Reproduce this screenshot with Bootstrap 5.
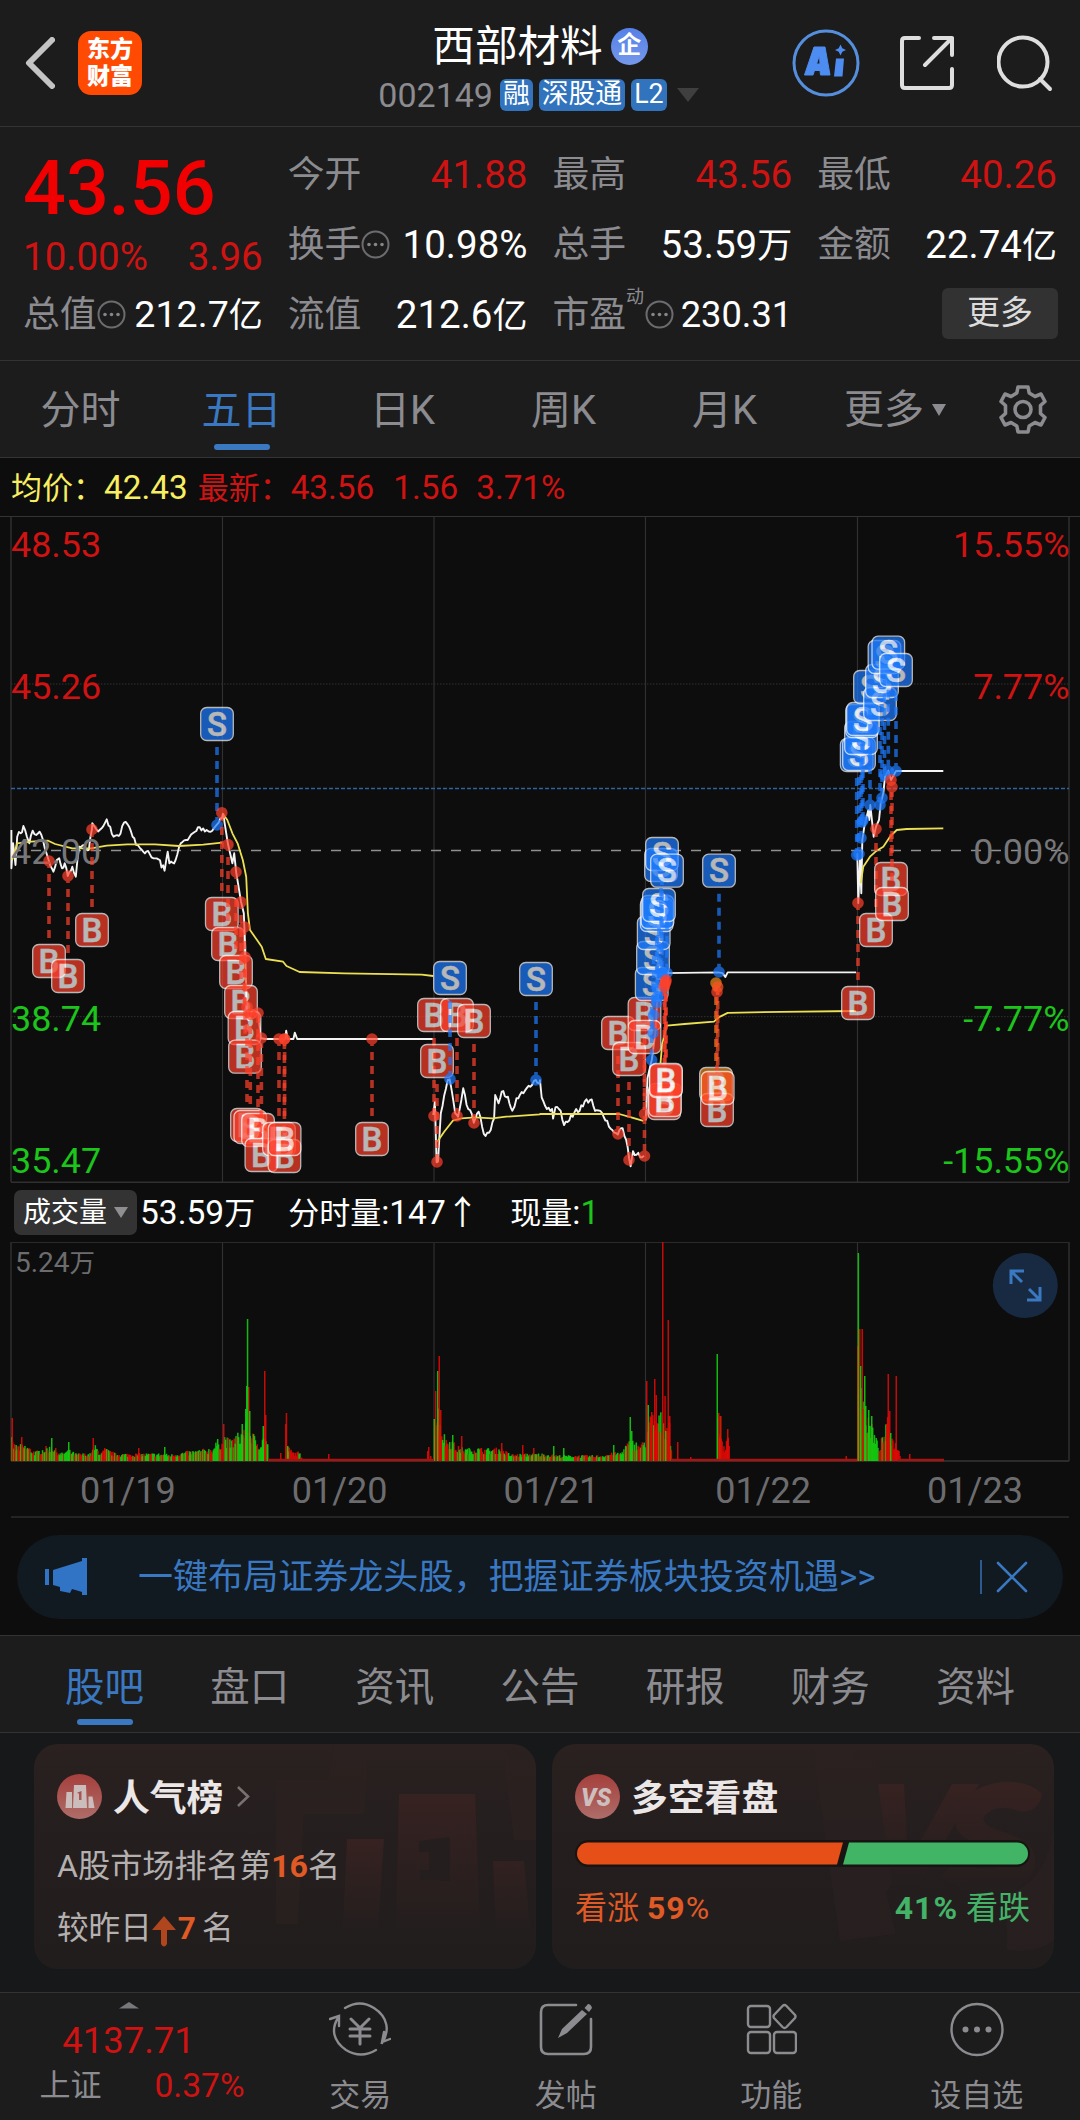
<!DOCTYPE html>
<html lang="zh-CN">
<head>
<meta charset="utf-8">
<meta name="viewport" content="width=device-width, initial-scale=1">
<title>西部材料 002149</title>
<link href="https://cdn.jsdelivr.net/npm/bootstrap@5.3.0/dist/css/bootstrap.min.css" rel="stylesheet">
<style>
  :root { --panel:#1c1c1c; --ink:#8b8b90; --line:#333335; --up:#cf1212; --down:#1cc41c; --blue:#3a78c2; }
  body { width:1080px; height:2120px; overflow:hidden; background:#0d0d0d; color:var(--ink);
    font-family:Roboto,"Noto Sans CJK SC",sans-serif; font-size:36.8px; line-height:1; }
  svg { display:block; flex:none; }
  .up { color:var(--up); } .down { color:var(--down); } .wht { color:#fff; }
  .panel { background:var(--panel); }
  .topbar { height:127px; border-bottom:1px solid var(--line); padding:0 27px 0 25px; }
  .logo { width:64px; height:64px; border-radius:13px; background:#ff4a03; color:#fff; font-weight:900; font-size:23px; line-height:27px; padding-top:5px; margin-left:23px; }
  .stockname { font-size:42.6px; line-height:48px; }
  .ent { width:37px; height:37px; border-radius:50%; background:linear-gradient(#5580e8,#7598ea); color:#fff; font-size:24px; font-weight:700; margin-left:8px; line-height:34px; }
  .code { font-size:34px; margin-right:7px; }
  .tag { background:#3173bd; color:#fff; border-radius:6px; height:32px; line-height:31px; font-size:26.8px; padding:0 3px; }
  .quote { height:234px; padding:13px 23px 0 23px; gap:25px; border-bottom:1px solid var(--line); }
  .qcol { flex:1 1 0; min-width:0; }
  .qrow { height:70px; white-space:nowrap; }
  .qrow .val { font-size:38.5px; }
  .qrow .val small { font-size:35px; }
  .bigprice { font-size:75.5px; font-weight:500; color:#f00000; height:88px; line-height:97px; }
  .chg { height:52px; line-height:57px; font-size:38.5px; }
  .morebtn { width:116px; height:51px; line-height:50px; border-radius:6px; background:#323232; color:#dcdcdc; font-size:33px; }
  .ktabs { height:97px; border-bottom:1px solid var(--line); font-size:40px; }
  .ktabs > div { position:relative; height:97px; line-height:100px; }
  .ktabs .cell { width:161px; }
  .act { color:var(--blue) !important; }
  .act::after { content:""; position:absolute; left:50%; margin-left:-28px; width:56px; height:6px; border-radius:3px; background:var(--blue); bottom:8px; }
  .legend5 { height:58px; padding:0 11px; font-size:33.3px; line-height:59px; white-space:pre; }
  .legend5 .zh { font-size:31px; }
  .volbar { height:59px; padding:7px 15px 0 14px; font-size:33.5px; line-height:46px; white-space:nowrap; }
  .volbar .zh { font-size:31px; }
  .volbtn { width:123px; height:45px; border-radius:7px; background:#333; font-size:28px; line-height:44px; padding:0 9px; }
  .notice { margin:17px 17px 0; height:84px; border-radius:42px; background:#111921; color:var(--blue); font-size:35px; line-height:85px; }
  .btabs { margin-top:16px; height:98px; border-top:1px solid var(--line); border-bottom:1px solid var(--line); padding:0 32px; font-size:39.5px; }
  .btabs > div { flex:1 1 0; position:relative; height:96px; line-height:103px; text-align:center; }
  .btabs .act::after { bottom:7px; }
  .cards { height:259px; background:#17181a; padding:11px 26px 0 34px; gap:16px; }
  .tile { position:relative; width:502px; height:225px; border-radius:24px; background:linear-gradient(#2a2120,#241e1e 45%,#221d1d); overflow:hidden; padding:27px 24px 0 23px; color:#b4b0b0; font-size:32.2px; }
  .tile .bgart { position:absolute; right:0; top:0; }
  .tile > div { position:relative; }
  .tile .ttl { font-size:36.8px; font-weight:700; color:#ebe7e7; margin-left:11px; line-height:50px; padding-top:3px; height:50px; }
  .or { color:#e05a26; } .gr { color:#43b368; }
  .dock { height:128px; border-top:1px solid var(--line); font-size:31px; }
  .dock .cell { width:205.5px; padding:9px 0 0 1px; }
  .dock .cell span { margin-top:15px; line-height:48px; }
  .idx { width:257px; padding-top:9px; }
</style>
</head>
<body>
<header class="panel topbar d-flex align-items-center">
  <div class="d-flex align-items-center" style="width:330px">
    <svg width="30" height="52" viewBox="0 0 30 52"><path d="M27 3 4 26 27 49" fill="none" stroke="#c4c4c4" stroke-width="6" stroke-linecap="round" stroke-linejoin="round"/></svg>
    <div class="logo text-center">东方<br>财富</div>
  </div>
  <div class="flex-grow-1 d-flex flex-column align-items-center pt-2">
    <div class="d-flex align-items-center"><span class="stockname wht">西部材料</span><span class="ent text-center">企</span></div>
    <div class="d-flex align-items-center mt-2" style="margin-left:-3px"><span class="code">002149</span><span class="tag">融</span><span class="tag" style="margin-left:6px">深股通</span><span class="tag" style="margin-left:6px">L2</span>
      <svg width="22" height="16" style="margin-left:10px"><path d="M0 1H22L11 15Z" fill="#3f3f3f"/></svg></div>
  </div>
  <div class="d-flex align-items-center justify-content-end" style="width:328px">
    <svg width="68" height="68" viewBox="0 0 68 68"><circle cx="34" cy="34" r="32" fill="none" stroke="#568ede" stroke-width="3"/><path fill="#4d8cf0" fill-rule="evenodd" d="M22 18H33L38 46H28.500L28 41.500H22.500L21 46H12.500ZM27.500 26 24.500 35H28Z" stroke="#4d8cf0" stroke-width="1" stroke-linejoin="round"/><path fill="#4d8cf0" d="M44 29.500H52L50.500 47.500H42ZM48.500 15.500 50.300 19.200 54 21 50.300 22.800 48.500 26.500 46.700 22.800 43 21 46.700 19.200Z"/></svg>
    <svg width="54" height="56" viewBox="0 0 54 56" style="margin-left:40px" fill="none" stroke="#dedede" stroke-width="4" stroke-linecap="round" stroke-linejoin="round"><path d="M19 3H5Q2 3 2 6V50Q2 53 5 53H49Q52 53 52 50V34"/><path d="M34 3H52V20M52 3 25 30"/></svg>
    <svg width="56" height="57" viewBox="0 0 56 57" style="margin-left:43px" fill="none" stroke="#dedede" stroke-width="4" stroke-linecap="round"><circle cx="26" cy="27" r="24.5"/><path d="M43 44 53 54"/></svg>
  </div>
</header>

<section class="panel quote d-flex">
  <div class="qcol">
    <div class="bigprice">43.56</div>
    <div class="chg d-flex justify-content-between up"><span>10.00%</span><span>3.96</span></div>
    <div class="qrow d-flex align-items-center justify-content-between"><span class="d-flex align-items-center">总值<svg width="29" height="29" viewBox="0 0 29 29"><use href="#dots"/></svg></span><span class="val wht" style="font-size:37.6px">212.7<small style="font-size:34px">亿</small></span></div>
  </div>
  <div class="qcol">
    <div class="qrow d-flex align-items-center justify-content-between"><span>今开</span><span class="val up">41.88</span></div>
    <div class="qrow d-flex align-items-center justify-content-between"><span class="d-flex align-items-center">换手<svg width="29" height="29" viewBox="0 0 29 29"><use href="#dots"/></svg></span><span class="val wht">10.98%</span></div>
    <div class="qrow d-flex align-items-center justify-content-between"><span>流值</span><span class="val wht">212.6<small>亿</small></span></div>
  </div>
  <div class="qcol">
    <div class="qrow d-flex align-items-center justify-content-between"><span>最高</span><span class="val up">43.56</span></div>
    <div class="qrow d-flex align-items-center justify-content-between"><span>总手</span><span class="val wht">53.59<small>万</small></span></div>
    <div class="qrow d-flex align-items-center justify-content-between"><span class="d-flex align-items-center">市盈<span class="align-self-start" style="font-size:18px;margin-top:-9px">动</span><svg width="29" height="29" viewBox="0 0 29 29" style="margin-left:1px"><use href="#dots"/></svg></span><span class="val wht" style="font-size:36.3px">230.31</span></div>
  </div>
  <div class="qcol">
    <div class="qrow d-flex align-items-center justify-content-between"><span>最低</span><span class="val up">40.26</span></div>
    <div class="qrow d-flex align-items-center justify-content-between"><span>金额</span><span class="val wht">22.74<small>亿</small></span></div>
    <div class="qrow d-flex align-items-center justify-content-end"><div class="morebtn text-center" style="margin:-4px -1px 0 0">更多</div></div>
  </div>
</section>
<svg width="0" height="0" class="position-absolute"><defs>
  <g id="dots"><circle cx="14.5" cy="14.5" r="13" fill="none" stroke="#6c6c70" stroke-width="2"/><g fill="#85858a"><circle cx="8" cy="14.5" r="1.8"/><circle cx="14.5" cy="14.5" r="1.8"/><circle cx="21" cy="14.5" r="1.8"/></g></g>
</defs></svg>

<nav class="panel ktabs d-flex text-center">
  <div class="cell">分时</div><div class="cell act">五日</div><div class="cell">日K</div><div class="cell">周K</div><div class="cell">月K</div>
  <div class="d-flex align-items-center justify-content-center" style="width:182px;padding-right:2px">更多<svg width="14" height="12" style="margin-left:8px"><path d="M0 0H14L7 12Z" fill="#8b8b90"/></svg></div>
  <div class="d-flex align-items-center" style="width:93px"><svg width="48" height="49" viewBox="-24 -24.5 48 49" style="margin:0 0 0 12px" fill="none" stroke="#8b8b90" stroke-width="3.6" stroke-linejoin="round"><path d="M-5-22.500H5L6.200-16.500 12-13 18-15.500 22-8 17.500-4V4L22 8 18 15.500 12 13 6.200 16.500 5 22.500H-5L-6.200 16.500-12 13-18 15.500-22 8-17.500 4V-4L-22-8-18-15.500-12-13-6.200-16.500Z"/><circle r="8"/></svg></div>
</nav>

<div class="legend5"><span style="color:#f8ee62"><span class="zh">均价：</span>42.43</span><span class="up"><span class="zh" style="margin-left:10px">最新：</span>43.56<span style="margin-left:19px">1.56</span><span style="margin-left:18px">3.71%</span></span></div>

<svg id="price" width="1080" height="667" viewBox="0 516 1080 667"></svg>

<div class="volbar d-flex wht">
  <div class="volbtn d-flex align-items-center">成交量<svg width="14" height="12" style="margin-left:7px"><path d="M0 0H14L7 11Z" fill="#8f8f92"/></svg></div>
  <span style="margin-left:3px">53.59<span class="zh">万</span></span>
  <span style="margin-left:33px"><span class="zh">分时量</span>:147↑</span>
  <span style="margin-left:31px"><span class="zh">现量</span>:<span class="down">1</span></span>
</div>

<svg id="vol" width="1080" height="276" viewBox="0 1242 1080 276"></svg>

<div class="notice d-flex align-items-center">
  <svg width="43" height="38" viewBox="0 0 43 38" style="margin-left:28px" fill="#3173c4"><path d="M0 11H4V27H0ZM8 12 37 3V0H42V37H37V34L27 31 25 35 15 33V29L8 27Z"/></svg>
  <span style="margin-left:50px;letter-spacing:.05px">一键布局证券龙头股，把握证券板块投资机遇&gt;&gt;</span>
  <svg class="ms-auto" width="48" height="36" viewBox="0 0 48 36" style="margin-right:35px" fill="none" stroke="#3a78c2"><path d="M1 1V35" stroke-width="1.4"/><path d="M18 4 46 32M46 4 18 32" stroke-width="2.6" stroke-linecap="round"/></svg>
</div>

<nav class="panel btabs d-flex"><div class="act">股吧</div><div>盘口</div><div>资讯</div><div>公告</div><div>研报</div><div>财务</div><div>资料</div></nav>

<section class="cards d-flex">
  <div class="tile">
    <svg class="bgart" width="262" height="225" viewBox="0 0 262 225"><path d="M60 0H230L236 16H94L90 70H30L24 180H2V36H54ZM230 16H262V96H240Z" fill="#2b2120" opacity=".75"/><g fill="url(#fade)"><path fill-rule="evenodd" d="M125 50H201L206 184H122ZM145 97 176 93V137H165V136H146V126H155V108H145Z"/><path d="M73 95H110L104 184H69ZM219 117H250L256 184H222Z"/></g><defs><linearGradient id="fade" x1="0" y1="0" x2="0" y2="1"><stop stop-color="#362221"/><stop offset="1" stop-color="#241e1e"/></linearGradient></defs></svg>
    <div class="d-flex align-items-center"><svg width="45" height="45" viewBox="0 0 45 45"><defs><linearGradient id="badge" x1="0" y1="0" x2="0" y2="1"><stop stop-color="#a53f3c"/><stop offset="1" stop-color="#ae6d69"/></linearGradient></defs><circle cx="22.5" cy="22.5" r="22.5" fill="url(#badge)"/><path fill="#cbbdbc" fill-rule="evenodd" d="M9.500 18h5.500v16H8.500ZM17 11h12l1 23H16ZM31.500 22.500h4l2 11.500h-6ZM20.500 18.500l4-1.500v9h-2.500v-6.500h-1.500Z"/></svg><span class="ttl">人气榜</span><svg width="14" height="23" viewBox="0 0 14 23" style="margin-left:13px"><path d="M2 2 12 11.500 2 21" fill="none" stroke="#77716f" stroke-width="2.6"/></svg></div>
    <div style="margin-top:25px;line-height:40px">A股市场排名第<b class="or">16</b>名</div>
    <div class="d-flex align-items-center" style="margin-top:23px;line-height:40px;font-size:31.6px">较昨日<svg width="24" height="31" viewBox="0 0 24 31" style="margin:4px 2px 0 0"><path d="M12 0 24 14H15V28Q12 33 9 28V14H0Z" fill="#b0461e"/></svg><b class="or">7</b><span style="margin-left:6px">名</span></div>
  </div>
  <div class="tile">
    <svg class="bgart" width="242" height="225" viewBox="0 0 242 225"><path d="M0 0H40L84 190 28 197Z M40 15H66L80 140 60 170ZM195 206V150Q235 140 242 80V196Q225 210 195 206Z" fill="#2b2221" opacity=".6"/><g fill="url(#fade)"><path d="M66 40H92L96 120 140 40H167L107 140H80Z"/><path d="M230 50Q228 66 210 68 185 58 172 72C165 92 232 84 222 124 214 154 160 156 128 132L146 116Q175 132 194 118C192 98 130 104 146 66 160 34 212 30 230 50Z"/></g></svg>
    <div class="d-flex align-items-center"><svg width="45" height="45" viewBox="0 0 45 45"><circle cx="22.500" cy="22.500" r="22.500" fill="url(#badge)"/><text x="21" y="31.500" text-anchor="middle" font-family="Roboto, sans-serif" font-weight="900" font-style="italic" font-size="25" textLength="30" lengthAdjust="spacingAndGlyphs" fill="#cdbfbd">VS</text></svg><span class="ttl">多空看盘</span></div>
    <svg width="455" height="27" viewBox="0 0 455 27" class="position-relative" style="margin-top:19px"><rect width="455" height="27" rx="13.500" fill="#171413"/><path d="M13 2.500H268L262 24.500H13A11 11 0 0 1 13 2.500Z" fill="#e64f17"/><path d="M274 2.500H442A11 11 0 0 1 442 24.500H268Z" fill="#41b465"/></svg>
    <div class="d-flex justify-content-between" style="margin-top:21px;line-height:40px;font-size:32px"><span class="or">看涨 <b style="letter-spacing:1px">59</b><span style="letter-spacing:1px">%</span></span><span class="gr"><b style="letter-spacing:1px">41%</b> 看跌</span></div>
  </div>
</section>

<footer class="panel dock d-flex">
  <div class="idx up d-flex flex-column align-items-center">
    <svg width="20" height="7" style="margin-left:1px"><path d="M10 0 20 6.500H0Z" fill="#77777c"/></svg>
    <div style="font-size:36.4px;line-height:48px;margin-top:8px">4137.71</div>
    <div class="d-flex justify-content-between align-items-center" style="width:205px;margin:0 0 0 27px;line-height:42px;font-size:33.6px"><span style="color:var(--ink);font-size:31px">上证</span><span>0.37%</span></div>
  </div>
  <div class="cell d-flex flex-column align-items-center"><svg width="62" height="55" viewBox="0 0 62 55" fill="none" stroke="#8b8b90" stroke-width="2.400" stroke-linecap="round"><path d="M16 6Q31-3 45 6C59 15 61 29 53 41M47 48Q32 57 17 48C4 39 2 27 9 16M1 17 10 14 10 24M61 37 53 40 55 30" /><path d="M22 17 31 26 40 17M31 26V42M21 27H41M21 34H41" stroke-width="3"/></svg><span>交易</span></div>
  <div class="cell d-flex flex-column align-items-center"><svg width="54" height="55" viewBox="0 0 54 55" fill="none" stroke="#8b8b90" stroke-width="2.600"><path d="M37 3H9Q2 3 2 10V45Q2 52 9 52H45Q52 52 52 45V17" stroke-linecap="round"/><path d="M43 8 48 12 28 31 19 36 23 27ZM45.500 6 49 2Q52 2 53 6L50 10Z" fill="#8b8b90" stroke="none"/></svg><span>发帖</span></div>
  <div class="cell d-flex flex-column align-items-center"><svg width="51" height="55" viewBox="0 0 51 55" fill="none" stroke="#8b8b90" stroke-width="2.400"><rect x="2" y="4" width="22" height="21" rx="3"/><rect x="2" y="30" width="22" height="21" rx="3"/><rect x="28" y="30" width="22" height="21" rx="3"/><path d="M36.500 4Q38.500 2 40.500 4L49 13Q50 14.500 49 16L40.500 25Q38.500 27 36.500 25L28 16Q27 14.500 28 13Z"/></svg><span>功能</span></div>
  <div class="cell d-flex flex-column align-items-center"><svg width="54" height="55" viewBox="0 0 54 55"><circle cx="27" cy="27.500" r="25.500" fill="none" stroke="#8b8b90" stroke-width="2.400"/><g fill="#8b8b90"><circle cx="15.500" cy="27.500" r="3"/><circle cx="27" cy="27.500" r="3"/><circle cx="38.500" cy="27.500" r="3"/></g></svg><span>设自选</span></div>
</footer>

<script src="https://cdn.jsdelivr.net/npm/bootstrap@5.3.0/dist/js/bootstrap.bundle.min.js"></script>
<script>
// Repeatable noise so the intraday series look the same on every load
let seed = 7;
const rnd = () => (seed = (seed * 16807) % 2147483647) / 2147483647;

const DAYS = [11, 222.5, 434, 645.5, 857.5, 1069];
const L = (x1, y1, x2, y2, c, extra = '') => `<path d="M${x1} ${y1}L${x2} ${y2}" stroke="${c}" fill="none" ${extra}/>`;

// Sample grids: each series is recorded on the grid of its segment
const left = ([x, y]) => [x / 2.904, 700 + y / 3];
const mid = ([x, y]) => [540 + x / 2.904, 600 + y / 2.613];
const right = ([x, y]) => [830 + x / 3, 620 + y / 3];
const pairs = s => s.split(' ').map(p => p.split(',').map(Number));
const jitter = (pts, amp) => {
  const out = [];
  pts.forEach((p, i) => {
    if (i) { const q = pts[i - 1], n = Math.max(1, Math.round((p[0] - q[0]) / 1.7));
      for (let k = 1; k < n; k++) out.push([q[0] + (p[0] - q[0]) * k / n, q[1] + (p[1] - q[1]) * k / n + (rnd() - .5) * amp]); }
    out.push(p);
  });
  return out;
};
const line = (pts, c, w) => `<polyline points="${pts.map(p => p.map(v => v.toFixed(1)).join()).join(' ')}" fill="none" stroke="${c}" stroke-width="${w}" stroke-linejoin="round"/>`;

const day1 = pairs('33,390 33,505 38,430 45,495 50,410 60,400 68,378 78,410 85,430 95,392 105,405 115,395 125,420 135,460 142,483 155,515 165,480 172,475 180,505 188,490 197,528 210,500 220,530 230,440 245,435 258,450 267,388 268,370 280,388 295,385 310,358 320,380 330,410 345,408 360,368 375,380 385,410 400,435 412,450 425,455 440,472 460,478 478,512 487,455 492,490 510,480 525,430 545,420 560,400 580,382 600,390 612,395 630,374 640,355 648,340').map(left);
const day2 = pairs('648,340 662,433 675,490 680,460 686,517 700,605 708,640 712,740 716,920 722,960 735,930 750,938 757,1015 770,1017 828,1017 831,992 835,1017 852,1017 856,998 863,1017 1258,1017').map(left);
const day3 = pairs('1258,1245 1263,1205 1268,1387 1272,1385 1280,1240 1300,1140 1306,1138 1322,1240 1330,1250 1345,1165 1355,1215 1365,1230 1376,1268 1390,1235 1400,1280 1410,1308 1425,1290 1435,1255 1438,1185 1448,1210 1457,1175 1475,1190 1488,1232 1500,1195 1520,1180 1540,1160 1556,1140 1566,1150').map(left)
  .concat(pairs('0,1255 5,1300 20,1330 35,1330 38,1355 45,1325 60,1335 70,1372 85,1360 105,1330 115,1335 130,1310 150,1305 160,1335 180,1340 190,1360 210,1385 226,1397 240,1380 250,1410 263,1480 270,1440 280,1450 302,1452').map(mid));
const day4 = pairs('307,1360 312,1250 325,1200 335,1130 340,1050 350,1000 360,975 518,973 530,975 538,985 545,973 918,973').map(mid);
const day5 = pairs('82,700 85,849 90,720 94,820 97,660 103,620 115,570 118,600 121,555 131,650 138,620 147,600 152,550 160,520 165,470 175,452 183,480 198,453 340,453').map(right);
const avg = [
  pairs('35,480 50,430 90,425 140,422 160,432 210,445 265,445 310,437 370,433 450,433 520,438 590,434 645,428').map(left),
  pairs('650,345 660,360 675,400 690,430 705,480 715,530 720,640 726,690 745,718 760,740 772,777 822,785 832,798 870,816 1000,820 1225,824 1258,828').map(left),
  pairs('1270,1325 1290,1295 1315,1262 1340,1255 1380,1252 1430,1255 1470,1250 1568,1243').map(left).concat(pairs('0,1343 230,1343 270,1353 300,1361').map(mid)),
  pairs('350,1210 355,1160 368,1112 420,1108 505,1102 520,1090 545,1079 700,1076 918,1074').map(mid),
  pairs('92,790 100,740 120,710 140,692 160,680 180,650 200,630 230,627 340,625').map(right)];

// Trades: side, x, tag centre y, price point y
const trades = `B 49 961 861,B 68 976 876,B 92 930 829.5,S 217 724 825,B 221.8 914 812.7,B 228 944 844.5,B 236 972 872,B 241 1002 902,B 244.5 1028 927,B 245 1056.700 957,
B 247 1125 1007,B 250.300 1127 1014,B 258 1130 1013,B 261.400 1155 1038,B 279 1139 1039,B 284.400 1156 1039,B 284.600 1139 1039,B 372 1139 1039,
B 434 1015 1116,B 457 1015 1116,B 437 1061 1162,B 474 1021 1123,S 450 978 1079,S 536 979 1080,
B 618 1033 1134,B 629 1059 1160,B 644.500 1014 1114,B 644.500 1037 1156,S 651.700 984 1060,S 653 958 1033,S 653.700 933 1015,S 656.700 915 1003,S 657.500 912 997,S 659 905 990,
S 661 865 974,S 662 854 973,S 667 870.700 973,B 664.300 1103 987,B 665 1100 984,B 665.700 1081 982,B 666 1080 980,S 719 870.700 972,O 716 1084 983,B 717 1110 992,P 717.700 1088 987,
B 858 1003 903,S 856.700 755 855,S 859 754 854,S 861 738 838,S 862 721 822,S 863 719 820,S 870 687 805,S 880 704 805,S 882 681 798,S 884.500 657 775,S 888.300 652.700 771,S 896 670 771,
B 876 930 829,B 891 879 780,B 892 904 787`.split(',').map(t => t.trim().split(' '));
const HUE = { B: '#ff412b', S: '#1e7bff', O: '#f28a1c', P: '#ff5223' };

let g = '';
DAYS.forEach((x, i) => g += L(x, 516, x, 1182, i % 5 ? '#303030' : '#262626', `stroke-width="${i % 5 ? 1.2 : 2}"`));
g += L(0, 516.5, 1080, 516.5, '#333335') + L(11, 1182.3, 1069, 1182.3, '#303030', 'stroke-width="1.500"');
g += L(11, 684, 1069, 684, '#333', 'stroke-dasharray="1.5 1.5"') + L(11, 1016.7, 1069, 1016.7, '#333', 'stroke-dasharray="1.5 1.5"');
g += L(11, 850.5, 1069, 850.5, '#909090', 'stroke-width="1.500" stroke-dasharray="10 10"');
g += L(11, 788.5, 1069, 788.5, '#2f62a0', 'stroke-width="1.300" stroke-dasharray="4 2"');
const axis = (y, a, b, c) => `<text x="11" y="${y}" fill="${c}">${a}</text><text x="1069.5" y="${y}" text-anchor="end" fill="${c}">${b}</text>`;
g += '<g font-size="35.900" font-family="Roboto, sans-serif">' + axis(556.5, '48.53', '15.55%', '#cf1212') + axis(698.7, '45.26', '7.77%', '#cf1212') + axis(1030.5, '38.74', '-7.77%', '#1cc41c') + axis(1172.5, '35.47', '-15.55%', '#1cc41c') + '</g>';
[jitter(day1, 6), day2, jitter(day3, 5), day4, day5].forEach(d => g += line(d, '#f4f4f4', 1.9));
avg.forEach(d => g += line(d, '#ece052', 1.8));
g += '<g font-size="35.900" font-family="Roboto, sans-serif">' + axis(864.3, '42.00', '0.00%', '#77777a') + '</g>';
for (const [side, xs, cys, dys] of trades) {
  const x = +xs, cy = +cys, dy = +dys, c = HUE[side], dir = dy > cy ? 1 : -1;
  g += `<g opacity=".7">${L(x, cy + dir * 23, x, dy, c, 'stroke-width="3.600" stroke-dasharray="8 6"')}<circle cx="${x}" cy="${dy}" r="5.800" fill="${c}"/>
  <rect x="${x - 16.3}" y="${cy - 16.5}" width="32.6" height="33" rx="6" fill="${c}" stroke="#fff" stroke-width="1.300"/>
  <text x="${x}" y="${cy + 11.5}" text-anchor="middle" fill="#fff" stroke="#fff" stroke-width=".5" font-family="Roboto, sans-serif" font-weight="500" font-size="33">${side === 'S' ? 'S' : 'B'}</text></g>`;
}
document.getElementById('price').innerHTML = g;

// Volume: [x, height] envelopes per stretch, with the share of rising minutes
const env = [
  [.45, '11,24 14,17 25,17 35,10 45,15 52,16 60,8 68,12 75,8 90,8 94,17 100,9 105,13 115,8 140,8 160,8 170,7 185,10 200,12 212,14 218,24 222,20'],
  [.2, '223,28 230,21 236,29 240,30 245,42 250,34 255,24 260,20 264,30 267,18'],
  [.8, '286,17 292,10 296,9 298,10 302,3'],
  [.5, '434,45 438,60 440,38 445,25 452,22 455,16 465,13 475,14 490,13 500,14 510,7 530,8 540,8 560,6 600,6 613,9 620,9 627,20 632,22 640,17 645,25'],
  [.85, '646,40 651,50 656,45 660,50 665,40 669,45 671,5'],
  [.9, '717,45 720,45 722,16 725,18 728,28 729,4'],
  [.3, '857,100 862,85 864,60 866,45 871,42 874,27 878,18'],
  [.85, '879,18 884,32 887,45 890,30 893,22 897,17 900,5']];
let v = '';
DAYS.forEach((x, i) => v += L(x, 1242, x, 1461, i % 5 ? '#303030' : '#262626', `stroke-width="${i % 5 ? 1.2 : 2}"`));
v += L(11, 1242.500, 1069, 1242.500, '#2a2a2a') + L(11, 1461, 1069, 1461, '#2b2b2b', 'stroke-width="2"') + L(11, 1517, 1069, 1517, '#242424', 'stroke-width="2"');
const bar = (x, h, r) => v += `<rect x="${x.toFixed(2)}" y="${(1461 - h).toFixed(1)}" width="1.5" height="${h.toFixed(1)}" fill="${r ? '#dd0a06' : '#14cc10'}" opacity=".9"/>`;
for (const [share, s] of env) {
  const p = pairs(s);
  for (let x = p[0][0], k = 0; x <= p[p.length - 1][0]; x += .88) {
    while (k < p.length - 2 && p[k + 1][0] < x) k++;
    const [x0, h0] = p[k], [x1, h1] = p[k + 1], h = h0 + (h1 - h0) * (x - x0) / (x1 - x0);
    bar(x, Math.max(2, h * (.5 + .5 * rnd())), rnd() < share);
  }
}
for (const [x, h, r] of [[11.5,43,1],[21,24,1],[51,23,0],[68,19,0],[92.500,23,1],[104,13,1],[138,13,1],[164,14,0],[223,37,1],[245,52,0],[246,75,0],[248,74,1],[246.800,142,0],[249,50,0],[241.500,37,0],[264,90,1],[265,46,1],[262.500,35,0],[285,37,1],[285.700,48,1],[287,15,0],[280,8,1],[328,7,1],[427,10,1],[428,14,1],[430,5,1],
  [433.500,42,0],[435,70,1],[437,90,0],[438.500,105,1],[440,51,1],[452,26,0],[461,25,1],[501,18,1],[522,16,1],[533,13,1],[553,15,0],[563,13,0],[613,16,0],[629.500,44,0],[631,30,0],[646,80,1],[647.500,56,0],[651,49,1],[654,82,1],[655.500,66,1],[662,219,1],[664.300,65,1],[665,30,0],[667.500,141,1],[669,45,1],[677,19,1],[690,4,1],
  [716.500,107,0],[718,48,1],[720,45,1],[727,32,1],[845.500,5,1],[857,115,1],[857.600,208,0],[859,132,1],[860,95,0],[861.500,132,1],[864,85,0],[865,55,0],[868,51,0],[871,45,0],[887.500,87,1],[889,50,1],[890,28,0],[895.500,85,1],[909,7,1]]) bar(x, h, r);
v += L(268, 1460, 434, 1460, '#a81412', 'stroke-width="2.500"') + L(671, 1460, 857, 1460, '#a81412', 'stroke-width="2.500"') + L(898, 1460, 944, 1460, '#a81412', 'stroke-width="2.500"');
v += '<g font-family="Roboto, Noto Sans CJK SC, sans-serif" fill="#6c6c6e"><text x="15" y="1271.700" font-size="28">5.24<tspan font-size="25.500">万</tspan></text>';
['01/19', '01/20', '01/21', '01/22', '01/23'].forEach((d, i) => v += `<text x="${127.800 + i * 211.800}" y="1502.500" font-size="36" text-anchor="middle">${d}</text>`);
v += '</g><circle cx="1025.300" cy="1285.500" r="32.500" fill="#172a42"/><path d="M1011 1284V1271H1024M1012 1272 1022 1282M1040 1287V1300H1027M1039 1299 1029 1289" fill="none" stroke="#3a78c2" stroke-width="3"/>';
document.getElementById('vol').innerHTML = v;
</script>
</body>
</html>
